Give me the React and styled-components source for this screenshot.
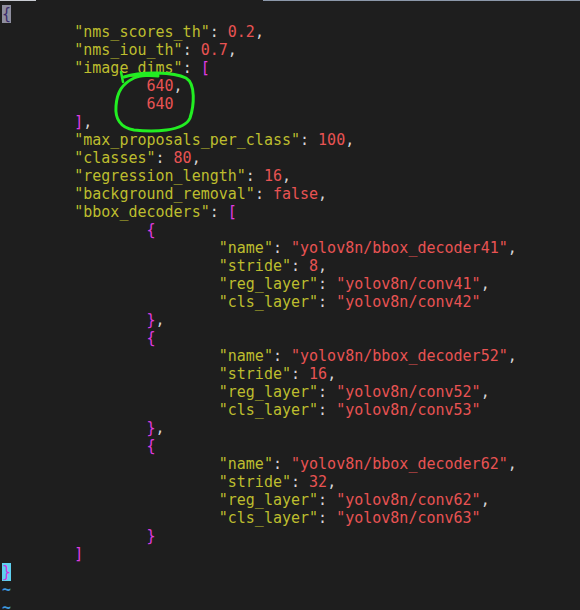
import React from "react";
import styled, { createGlobalStyle } from "styled-components";

const GlobalStyle = createGlobalStyle`
  html, body {
    margin: 0;
    padding: 0;
    background: #1e1e1e;
  }
`;

const colors = {
  key: "#bdbd2e",
  str: "#e85353",
  num: "#e85353",
  bracket: "#e03ce0",
  punct: "#d6d6d6",
  tilde: "#3d98dc",
};

const Screen = styled.div`
  position: relative;
  width: 580px;
  height: 610px;
  overflow: hidden;
  background: #1e1e1e;
  font-family: "DejaVu Sans Mono", "Liberation Mono", monospace;
  font-size: 15px;
`;

const TopStrip = styled.div`
  display: flex;
  height: 1px;
`;

const StripPart = styled.div`
  width: ${(p) => p.$w};
  flex: ${(p) => (p.$grow ? 1 : "none")};
  background: ${(p) => p.$bg};
`;

const Editor = styled.div`
  padding: 4px 0 0 2px;
`;

const Line = styled.div`
  height: 18px;
  line-height: 18px;
  white-space: pre;
  color: ${colors.punct};
`;

const Tok = styled.span`
  color: ${(p) => colors[p.$k] || colors.punct};
`;

const Cell = styled.span`
  display: inline-block;
  width: 9px;
  height: 18px;
  text-align: center;
  background: ${(p) => p.$bg};
  color: ${(p) => p.$fg};
`;

const Tilde = styled.div`
  height: 18px;
  line-height: 18px;
  color: ${colors.tilde};
  font-weight: bold;
`;

const Mark = styled.svg`
  position: absolute;
  left: 112px;
  top: 70px;
  width: 86px;
  height: 66px;
  pointer-events: none;
`;

const T = "        ";

// each line: [indent level, ...tokens]
const lines = [
  [0],
  [1, ["key", '"nms_scores_th"'], ["p", ": "], ["num", "0.2"], ["p", ","]],
  [1, ["key", '"nms_iou_th"'], ["p", ": "], ["num", "0.7"], ["p", ","]],
  [1, ["key", '"image_dims"'], ["p", ": "], ["bracket", "["]],
  [2, ["num", "640"], ["p", ","]],
  [2, ["num", "640"]],
  [1, ["bracket", "]"], ["p", ","]],
  [1, ["key", '"max_proposals_per_class"'], ["p", ": "], ["num", "100"], ["p", ","]],
  [1, ["key", '"classes"'], ["p", ": "], ["num", "80"], ["p", ","]],
  [1, ["key", '"regression_length"'], ["p", ": "], ["num", "16"], ["p", ","]],
  [1, ["key", '"background_removal"'], ["p", ": "], ["num", "false"], ["p", ","]],
  [1, ["key", '"bbox_decoders"'], ["p", ": "], ["bracket", "["]],
];

const decoders = [
  ["41", "8", "41", "42"],
  ["52", "16", "52", "53"],
  ["62", "32", "62", "63"],
];

decoders.forEach(([name, stride, reg, cls], i) => {
  lines.push([2, ["bracket", "{"]]);
  lines.push([3, ["key", '"name"'], ["p", ": "], ["str", `"yolov8n/bbox_decoder${name}"`], ["p", ","]]);
  lines.push([3, ["key", '"stride"'], ["p", ": "], ["num", stride], ["p", ","]]);
  lines.push([3, ["key", '"reg_layer"'], ["p", ": "], ["str", `"yolov8n/conv${reg}"`], ["p", ","]]);
  lines.push([3, ["key", '"cls_layer"'], ["p", ": "], ["str", `"yolov8n/conv${cls}"`]]);
  lines.push(i < 2 ? [2, ["bracket", "}"], ["p", ","]] : [2, ["bracket", "}"]]);
});
lines.push([1, ["bracket", "]"]]);

export default function App() {
  return (
    <Screen>
      <GlobalStyle />
      <TopStrip>
        <StripPart $w="36px" $bg="#c9ccd2" />
        <StripPart $w="227px" $bg="#1e1e1e" />
        <StripPart $grow $bg="#8c98aa" />
      </TopStrip>
      <Editor>
        <Line>
          <Cell $bg="#8e8e9e" $fg="#3a2a6a">{"{"}</Cell>
        </Line>
        {lines.slice(1).map(([lvl, ...toks], i) => (
          <Line key={i}>
            {T.repeat(lvl)}
            {toks.map(([k, t], j) => (
              <Tok key={j} $k={k}>
                {t}
              </Tok>
            ))}
          </Line>
        ))}
        <Line>
          <Cell $bg="#5fd0f0" $fg="#d030e0">{"}"}</Cell>
        </Line>
        <Tilde>~</Tilde>
        <Tilde>~</Tilde>
      </Editor>
      <Mark viewBox="0 0 86 66">
        <path
          d="M12 7 C 30 1, 62 2, 74 8 C 84 14, 82 36, 78 48 C 72 62, 40 62, 22 60 C 8 58, 3 48, 4 36 C 5 22, 10 14, 22 8 C 28 5, 40 5, 46 6"
          fill="none"
          stroke="#22ee22"
          strokeWidth="3"
          strokeLinecap="round"
        />
        <path d="M9 2 L 11 12" fill="none" stroke="#22ee22" strokeWidth="2.5" strokeLinecap="round" />
      </Mark>
    </Screen>
  );
}
